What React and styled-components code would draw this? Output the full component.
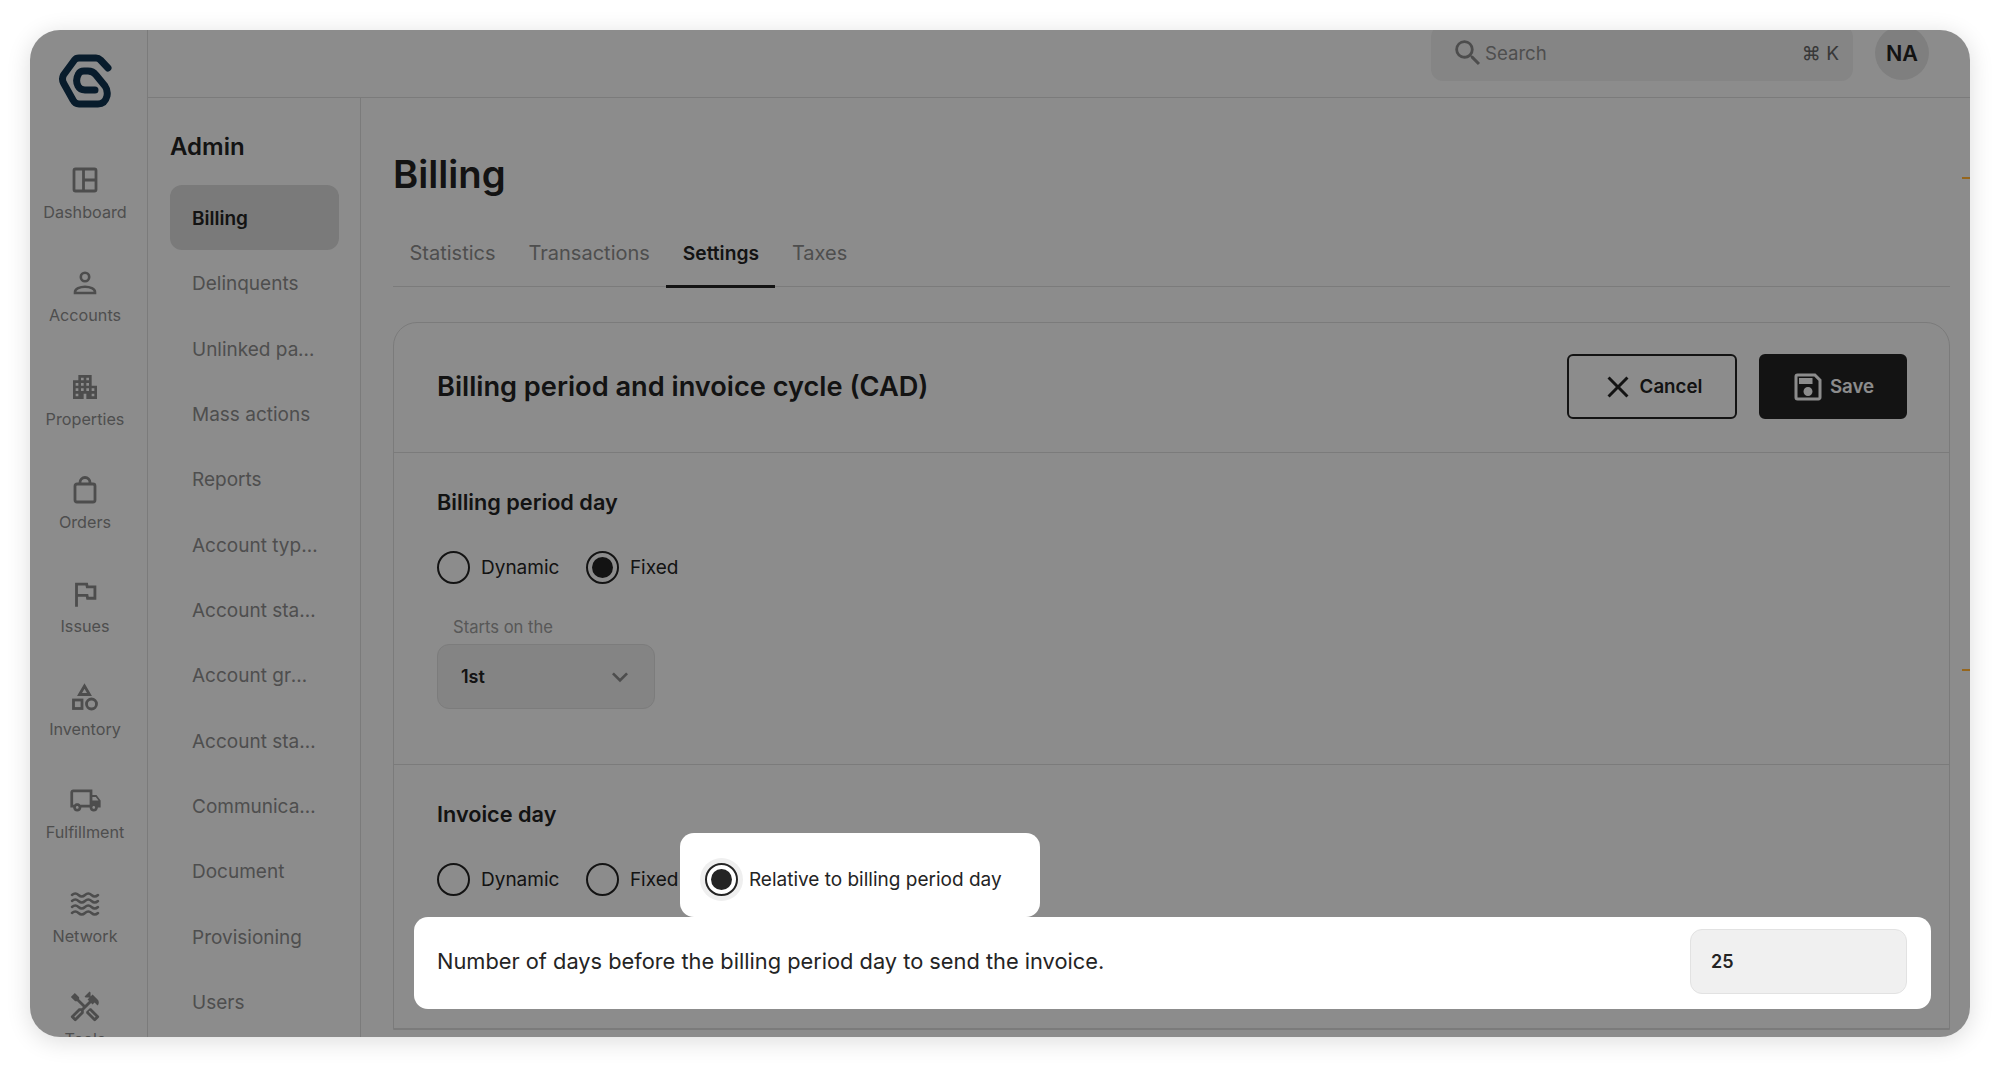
import React from 'react';
import styled, { createGlobalStyle } from 'styled-components';
import {
  MdApartment,
  MdClose,
  MdExpandMore,
  MdOutlineFlag,
  MdOutlineHandyman,
  MdOutlineLocalShipping,
  MdOutlineSave,
  MdSearch,
} from 'react-icons/md';

const GlobalStyle = createGlobalStyle`
  html, body {
    margin: 0;
    padding: 0;
    background: #fff;
  }
  * {
    box-sizing: border-box;
  }
  body {
    font-family: Inter, "Noto Sans", "Liberation Sans", sans-serif;
    color: #242424;
  }
`;

const Page = styled.div`
  width: 2000px;
  height: 1067px;
  padding: 30px;
  overflow: hidden;
`;

const Frame = styled.div`
  position: relative;
  width: 1940px;
  height: 1007px;
  display: grid;
  grid-template-columns: 118px 1fr;
  background: #fff;
  border-radius: 30px;
  overflow: hidden;
  box-shadow: 0 4px 24px rgba(0, 0, 0, 0.14);
`;

const Scrim = styled.div`
  position: absolute;
  inset: 0;
  z-index: 2;
  background: rgba(0, 0, 0, 0.45);
`;

const Tick = styled.div`
  position: absolute;
  right: 0;
  top: ${(p) => p.$top}px;
  z-index: 3;
  width: 8px;
  height: 2px;
  background: #96661c;
`;

// Rail
const Rail = styled.nav`
  height: 1007px;
  display: flex;
  flex-direction: column;
  align-items: center;
  padding: 24px 7px 0 0;
  border-right: 1px solid #e0e0e0;
  overflow: hidden;
`;

const LogoMark = styled.div`
  flex: none;
  width: 54px;
  height: 54px;
`;

const RailList = styled.div`
  flex: none;
  display: flex;
  flex-direction: column;
  gap: 41.4px;
  margin-top: 54px;
  width: 100%;
`;

const RailItem = styled.div`
  display: flex;
  flex-direction: column;
  align-items: center;
  gap: 2px;
`;

const RailIcon = styled.div`
  width: 36px;
  height: 36px;
  display: flex;
  align-items: center;
  justify-content: center;
  color: #8c8c8c;
`;

const RailLabel = styled.span`
  font-size: 16.2px;
  line-height: 24px;
  color: #8f8f8f;
`;

// Body columns
const Shell = styled.div`
  display: flex;
  flex-direction: column;
  min-width: 0;
  height: 1007px;
`;

const TopBar = styled.header`
  flex: 0 0 68px;
  min-height: 0;
  display: flex;
  justify-content: flex-end;
  align-items: flex-end;
  gap: 22px;
  padding: 0 41px 16px 0;
  border-bottom: 1px solid #e0e0e0;
`;

const SearchBox = styled.div`
  width: 422px;
  height: 56px;
  flex: none;
  display: flex;
  align-items: center;
  padding: 0 14px 0 20px;
  border-radius: 12px;
  background: #f2f2f2;
  color: #8c8c8c;
`;

const SearchText = styled.span`
  flex: 1;
  font-size: 18.6px;
  color: #8f8f8f;
`;

const Shortcut = styled.span`
  font-size: 19px;
  color: #666;
`;

const Avatar = styled.div`
  width: 54px;
  height: 54px;
  flex: none;
  margin-bottom: 1px;
  display: flex;
  align-items: center;
  justify-content: center;
  border-radius: 50%;
  background: #e8e8e8;
  font-size: 21.5px;
  font-weight: 600;
  color: #242424;
`;

const Columns = styled.div`
  flex: 1;
  display: grid;
  grid-template-columns: 213px 1fr;
  min-height: 0;
`;

// Admin menu
const AdminMenu = styled.aside`
  padding: 33px 21px 0 22px;
  border-right: 1px solid #e0e0e0;
  overflow: hidden;
`;

const AdminTitle = styled.h2`
  margin: 0 0 22px;
  font-size: 24px;
  line-height: 32px;
  font-weight: 600;
  color: #242424;
`;

const MenuItem = styled.div`
  height: 65.33px;
  padding: 0 20.7px 0 22px;
  border-radius: 12px;
  line-height: 67px;
  font-size: 19px;
  font-weight: ${(p) => (p.$active ? 600 : 400)};
  color: ${(p) => (p.$active ? '#242424' : '#8f8f8f')};
  background: ${(p) => (p.$active ? '#dedede' : 'transparent')};
  white-space: nowrap;
  overflow: hidden;
  text-overflow: ellipsis;
`;

// Main
const Main = styled.main`
  padding: 52px 20px 0 32px;
  overflow: hidden;
  min-width: 0;
`;

const PageTitle = styled.h1`
  margin: 0;
  font-size: 38.3px;
  line-height: 48px;
  font-weight: 600;
  color: #242424;
`;

const Tabs = styled.div`
  display: flex;
  height: 65px;
  margin-top: 24px;
  border-bottom: 1px solid #e0e0e0;
`;

const Tab = styled.div`
  height: 66px;
  padding: 0 16.5px 1px;
  display: flex;
  align-items: center;
  font-size: ${(p) => (p.$active ? 19.2 : 20)}px;
  font-weight: ${(p) => (p.$active ? 600 : 400)};
  color: ${(p) => (p.$active ? '#242424' : '#8f8f8f')};
  border-bottom: 3px solid ${(p) => (p.$active ? '#242424' : 'transparent')};
`;

const Card = styled.section`
  margin-top: 35px;
  border: 1px solid #e0e0e0;
  border-radius: 24px 24px 0 0;
`;

const CardHeader = styled.div`
  height: 130px;
  display: flex;
  align-items: center;
  justify-content: space-between;
  padding: 0 42px 2px 43px;
  border-bottom: 1px solid #e0e0e0;
`;

const CardTitle = styled.h3`
  margin: 0;
  font-size: 27.2px;
  font-weight: 600;
  color: #242424;
`;

const Actions = styled.div`
  display: flex;
  gap: 22px;
`;

const Button = styled.button`
  width: ${(p) => p.$width}px;
  height: 65px;
  display: flex;
  align-items: center;
  justify-content: center;
  gap: 4px;
  padding: 0 2px 0 0;
  border: 2px solid #242424;
  border-radius: 6px;
  font-family: inherit;
  font-size: 18.7px;
  font-weight: 600;
  background: ${(p) => (p.$solid ? '#242424' : '#fff')};
  color: ${(p) => (p.$solid ? '#fff' : '#242424')};
`;

const Section = styled.div`
  padding: 34px 42px ${(p) => p.$bottom}px 43px;
  border-bottom: 1px solid #e0e0e0;
`;

const SectionTitle = styled.h4`
  margin: 0 0 34px;
  font-size: 21.7px;
  line-height: 30px;
  font-weight: 600;
  color: #242424;
`;

const RadioRow = styled.div`
  display: flex;
  gap: 26.5px;
`;

const Option = styled.label`
  display: flex;
  align-items: center;
  gap: 11px;
  font-size: 19px;
  line-height: 33px;
  color: #242424;
`;

const RaisedOption = styled(Option)`
  position: relative;
  z-index: 3;
  margin: -30px -38px -21px -25px;
  padding: 30px 38px 21px 25px;
  border-radius: 14px;
  background: #fff;
`;

const RadioMark = styled.span`
  width: 33px;
  height: 33px;
  flex: none;
  border: 2px solid #242424;
  border-radius: 50%;
  background: ${(p) => (p.$checked ? '#242424' : 'transparent')};
  box-shadow: ${(p) => (p.$halo ? '0 0 0 5px #efefef' : 'none')};
  background-clip: content-box;
  padding: 4px;
`;

const FieldLabel = styled.div`
  margin: 33px 0 7px 16px;
  font-size: 16.6px;
  line-height: 20px;
  color: #a0a0a0;
`;

const SelectBox = styled.div`
  width: 218px;
  height: 65px;
  display: flex;
  align-items: center;
  justify-content: space-between;
  padding: 0 18px 0 23px;
  border: 1px solid #e2e2e2;
  border-radius: 12px;
  background: #f0f0f0;
  font-size: 18px;
  font-weight: 600;
  color: #242424;
`;

const DaysRow = styled.div`
  position: relative;
  z-index: 3;
  display: flex;
  align-items: center;
  justify-content: space-between;
  margin: 21px -24px 0 -23px;
  padding: 12px 24px 15px 23px;
  border-radius: 14px;
  background: #fff;
  color: #242424;
`;

const DaysText = styled.span`
  margin-bottom: 2px;
  font-size: 21.8px;
`;

const DaysInput = styled.div`
  width: 217px;
  height: 65px;
  display: flex;
  align-items: center;
  padding: 0 20px;
  border: 1px solid #e2e2e2;
  border-radius: 12px;
  background: #f0f0f0;
  font-size: 18px;
  font-weight: 600;
`;

const Logo = () => (
  <svg width="54" height="54" viewBox="0 0 54 54" fill="none">
    <path
      d="M50 14 L42.5 6 Q40.5 4 38 4 H21 Q18 4 16.5 6 L5.5 21 Q3.5 25 5.5 29 L15 46 Q17 50 21 50 H40 Q47 50 49 42 Q50 36 47 32 L38 21 Q35 17 30 17 H26 Q22 17 20.5 20 Q17 26 20 32 Q22 36 27 36 H37"
      stroke="#0f3350"
      strokeWidth="7"
      strokeLinecap="round"
      strokeLinejoin="round"
    />
  </svg>
);

const DashboardIcon = () => (
  <svg width="26" height="26" viewBox="0 0 26 26" fill="none" stroke="currentColor" strokeWidth="2.8">
    <rect x="2" y="2" width="22" height="22" rx="1.5" />
    <path d="M11.5 2v22M11.5 13H24" />
  </svg>
);

const PersonIcon = () => (
  <svg width="26" height="26" viewBox="0 0 26 26" fill="none" stroke="currentColor" strokeWidth="2.6">
    <circle cx="13" cy="7" r="4.2" />
    <path d="M3 23v-1c0-3.4 5-5.3 10-5.3s10 1.900 10 5.300v1z" />
  </svg>
);

const BagIcon = () => (
  <svg width="24" height="28" viewBox="0 0 24 28" fill="none" stroke="currentColor" strokeWidth="2.8">
    <rect x="2" y="8" width="20" height="18" rx="2" />
    <path d="M7 8V6.500a5 5 0 0 1 10 0V8" />
  </svg>
);

const ShapesIcon = () => (
  <svg width="28" height="28" viewBox="0 0 28 28" fill="none" stroke="currentColor" strokeWidth="2.8">
    <path d="M8.5 11.5 13.5 3l5 8.500z" strokeLinejoin="miter" />
    <rect x="2.5" y="17" width="8.500" height="8.500" />
    <circle cx="20.500" cy="21" r="5" />
  </svg>
);

const WavesIcon = () => (
  <svg width="30" height="26" viewBox="0 0 30 26" fill="none" stroke="currentColor" strokeWidth="2.500" strokeLinecap="round">
    <path d="M2 4q3.250-3 6.500 0t6.500 0 6.500 0 6.500 0" />
    <path d="M2 10q3.250-3 6.500 0t6.500 0 6.500 0 6.500 0" />
    <path d="M2 16q3.250-3 6.500 0t6.500 0 6.500 0 6.500 0" />
    <path d="M2 22q3.250-3 6.500 0t6.500 0 6.500 0 6.500 0" />
  </svg>
);

const railItems = [
  { label: 'Dashboard', icon: <DashboardIcon /> },
  { label: 'Accounts', icon: <PersonIcon /> },
  { label: 'Properties', icon: <MdApartment size={32} /> },
  { label: 'Orders', icon: <BagIcon /> },
  { label: 'Issues', icon: <MdOutlineFlag size={34} /> },
  { label: 'Inventory', icon: <ShapesIcon /> },
  { label: 'Fulfillment', icon: <MdOutlineLocalShipping size={33} /> },
  { label: 'Network', icon: <WavesIcon /> },
  { label: 'Tools', icon: <MdOutlineHandyman size={34} /> },
];

const menuItems = [
  'Billing',
  'Delinquents',
  'Unlinked payments',
  'Mass actions',
  'Reports',
  'Account types',
  'Account statuses',
  'Account groups',
  'Account statements',
  'Communications',
  'Document',
  'Provisioning',
  'Users',
];

const tabs = ['Statistics', 'Transactions', 'Settings', 'Taxes'];

const App = () => {
  return (
    <Page>
      <GlobalStyle />
      <Frame>
        <Rail>
          <LogoMark>
            <Logo />
          </LogoMark>
          <RailList>
            {railItems.map((item) => (
              <RailItem key={item.label}>
                <RailIcon>{item.icon}</RailIcon>
                <RailLabel>{item.label}</RailLabel>
              </RailItem>
            ))}
          </RailList>
        </Rail>

        <Shell>
          <TopBar>
            <SearchBox>
              <MdSearch size={34} />
              <SearchText>Search</SearchText>
              <Shortcut>⌘ K</Shortcut>
            </SearchBox>
            <Avatar>NA</Avatar>
          </TopBar>

          <Columns>
            <AdminMenu>
              <AdminTitle>Admin</AdminTitle>
              {menuItems.map((name, i) => (
                <MenuItem key={name} $active={i === 0}>{name}</MenuItem>
              ))}
            </AdminMenu>

            <Main>
              <PageTitle>Billing</PageTitle>
              <Tabs>
                {tabs.map((name) => (
                  <Tab key={name} $active={name === 'Settings'}>{name}</Tab>
                ))}
              </Tabs>

              <Card>
                <CardHeader>
                  <CardTitle>Billing period and invoice cycle (CAD)</CardTitle>
                  <Actions>
                    <Button $width={170}>
                      <MdClose size={36} />
                      Cancel
                    </Button>
                    <Button $width={148} $solid>
                      <MdOutlineSave size={36} />
                      Save
                    </Button>
                  </Actions>
                </CardHeader>

                <Section $bottom={55}>
                  <SectionTitle>Billing period day</SectionTitle>
                  <RadioRow>
                    <Option><RadioMark />Dynamic</Option>
                    <Option><RadioMark $checked />Fixed</Option>
                  </RadioRow>
                  <FieldLabel>Starts on the</FieldLabel>
                  <SelectBox>
                    1st
                    <MdExpandMore size={32} color="#8c8c8c" />
                  </SelectBox>
                </Section>

                <Section $bottom={19}>
                  <SectionTitle>Invoice day</SectionTitle>
                  <RadioRow>
                    <Option><RadioMark />Dynamic</Option>
                    <Option><RadioMark />Fixed</Option>
                    <RaisedOption><RadioMark $checked $halo />Relative to billing period day</RaisedOption>
                  </RadioRow>
                  <DaysRow>
                    <DaysText>Number of days before the billing period day to send the invoice.</DaysText>
                    <DaysInput>25</DaysInput>
                  </DaysRow>
                </Section>
              </Card>
            </Main>
          </Columns>
        </Shell>

        <Scrim />
        <Tick $top={147} />
        <Tick $top={639} />
      </Frame>
    </Page>
  );
};

export default App;
